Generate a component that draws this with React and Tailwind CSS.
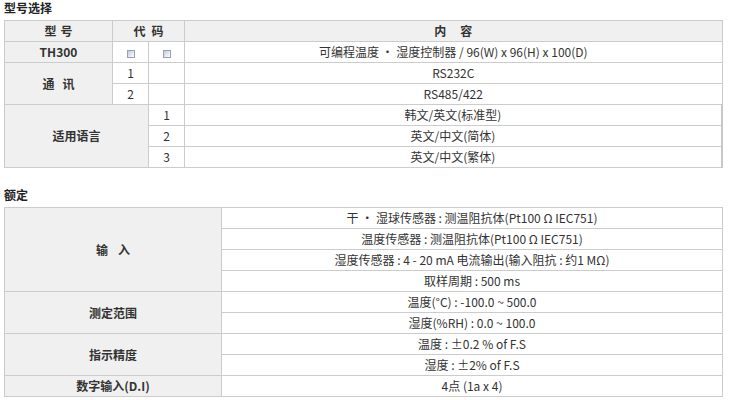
import React from 'react';

const font = { fontFamily: '"Noto Sans CJK SC", "Liberation Sans", sans-serif' };

const Box = () => (
  <span className="inline-block w-[8px] h-[8px] border border-[#a0a0a0] bg-gradient-to-br from-[#b8cbe6] to-[#ffffff] align-middle" />
);

// two characters with a wider gap, like the source's spaced headings
const Spaced = ({ a, b, gap }) => (
  <span className="inline-flex justify-center" style={{ columnGap: gap }}>
    <span>{a}</span>
    <span>{b}</span>
  </span>
);

const th = 'border border-[#cccccc] bg-[#f0f0f0] font-bold text-[#333] text-center';
const td = 'border border-[#cccccc] bg-white text-[#333] text-center';

const ratings = [
  { label: <Spaced a="输" b="入" gap={10} />, rows: ['干 · 湿球传感器 : 测温阻抗体(Pt100 Ω IEC751)', '温度传感器 : 测温阻抗体(Pt100 Ω IEC751)', '湿度传感器 : 4 - 20 mA 电流输出(输入阻抗 : 约1 MΩ)', '取样周期 : 500 ms'] },
  { label: '测定范围', rows: ['温度(°C) : -100.0 ~ 500.0', '湿度(%RH) : 0.0 ~ 100.0'] },
  { label: '指示精度', rows: ['温度 : ±0.2 % of F.S', '湿度 : ±2% of F.S'] },
  { label: '数字输入(D.I)', rows: ['4点 (1a x 4)'] },
];

export default function App() {
  return (
    <div className="w-[730px] h-[400px] bg-white pl-[4px] pr-[7px] text-[12px] overflow-hidden" style={font}>
      <h2 className="h-[16px] leading-[16px] font-bold text-[12px] text-[#222] mb-[4px]">型号选择</h2>
      <table className="w-full border-collapse table-fixed">
        <colgroup>
          <col className="w-[108px]" />
          <col className="w-[36px]" />
          <col className="w-[36px]" />
          <col />
        </colgroup>
        <tbody>
          <tr className="h-[21px]">
            <td className={th}><Spaced a="型" b="号" gap={4} /></td>
            <td className={th} colSpan={2}><Spaced a="代" b="码" gap={6} /></td>
            <td className={th}><Spaced a="内" b="容" gap={14} /></td>
          </tr>
          <tr className="h-[21px]">
            <td className={th}>TH300</td>
            <td className={td}><Box /></td>
            <td className={td}><Box /></td>
            <td className={td}>可编程温度 • 湿度控制器 / 96(W) x 96(H) x 100(D)</td>
          </tr>
          <tr className="h-[21px]">
            <td className={th} rowSpan={2}><Spaced a="通" b="讯" gap={8} /></td>
            <td className={td}>1</td>
            <td className={td}></td>
            <td className={td}>RS232C</td>
          </tr>
          <tr className="h-[21px]">
            <td className={td}>2</td>
            <td className={td}></td>
            <td className={td}>RS485/422</td>
          </tr>
          <tr className="h-[21px]">
            <td className={th} colSpan={2} rowSpan={3}>适用语言</td>
            <td className={td}>1</td>
            <td className={td + ' border-r-2 border-r-[#c8c8c8]'}>韩文/英文(标准型)</td>
          </tr>
          <tr className="h-[21px]">
            <td className={td}>2</td>
            <td className={td + ' border-r-2 border-r-[#c8c8c8]'}>英文/中文(简体)</td>
          </tr>
          <tr className="h-[21px]">
            <td className={td}>3</td>
            <td className={td + ' border-r-2 border-r-[#c8c8c8]'}>英文/中文(繁体)</td>
          </tr>
        </tbody>
      </table>

      <h2 className="h-[16px] leading-[16px] font-bold text-[12px] text-[#222] mt-[19px] mb-[4px]">额定</h2>
      <table className="w-full border-collapse table-fixed">
        <colgroup>
          <col className="w-[217px]" />
          <col />
        </colgroup>
        <tbody>
          {ratings.map((g, gi) =>
            g.rows.map((r, i) => (
              <tr key={gi + '-' + i} className="h-[21px]">
                {i === 0 && (
                  <td className={th} rowSpan={g.rows.length}>{g.label}</td>
                )}
                <td className={td}>{r}</td>
              </tr>
            ))
          )}
        </tbody>
      </table>
    </div>
  );
}
